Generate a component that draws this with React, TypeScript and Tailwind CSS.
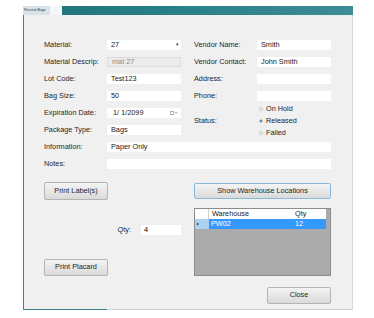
import React from 'react';

const font = { fontFamily: '"Liberation Sans", Arial, sans-serif' };

const Field: React.FC<{ value?: string; muted?: boolean; wide?: boolean; children?: React.ReactNode }> = ({ value, muted, wide, children }) => (
    <div
        className={`h-[10px] flex items-center pl-[4px] pr-[2px] ${wide ? 'w-[224px]' : 'w-[74px]'} ${muted ? 'bg-[#ececec] border border-[#dcdcdc] text-[#8a8a8a]' : 'bg-white text-[#1a1a1a]'}`}
    >
        <span className="flex-1 leading-none">{value}</span>
        {children}
    </div>
);

const Row: React.FC<{ label: string; children: React.ReactNode }> = ({ label, children }) => (
    <div className="h-[17px] flex items-center">
        <span className="w-[63px] leading-none text-[#262626]">{label}</span>
        {children}
    </div>
);

const Button: React.FC<{ label: string; className?: string; focused?: boolean }> = ({ label, className, focused }) => (
    <div
        className={`flex items-center justify-center rounded-[2px] border bg-gradient-to-b from-[#f4f4f4] to-[#dadada] text-[#1f1f1f] ${focused ? 'border-[#8ab9dc]' : 'border-[#b4b4b4]'} ${className ?? ''}`}
    >
        {label}
    </div>
);

const Radio: React.FC<{ label: string; checked?: boolean }> = ({ label, checked }) => (
    <div className="h-[12px] flex items-center">
        <span className="w-[4px] h-[4px] rounded-full border border-[#c8c8c8] bg-[#f6f6f6] flex items-center justify-center mr-[3px]">
            {checked && <span className="w-[2px] h-[2px] rounded-full bg-[#3a6c8c]" />}
        </span>
        <span className="leading-none text-[#262626]">{label}</span>
    </div>
);

export default function App() {
    return (
        <div className="w-[374px] h-[318px] bg-white overflow-hidden text-[7.3px]" style={font}>
            <div className="ml-[23px] mt-[6px] w-[330px]">
                {/* title bar */}
                <div className="h-[9px] flex bg-gradient-to-r from-[#1f7379] via-[#2a8189] to-[#3d8c97]">
                    <div className="w-[27px] bg-[#d7e3e8] text-[3.5px] text-[#2c3f4c] pl-px pt-[3px] leading-none">Receive Bags</div>
                    <div className="w-[12px] bg-[#f4f7f8]" />
                </div>
                {/* body */}
                <div className="h-[295px] bg-[#f0f0f0] border-l border-l-[#437f8c] border-r border-r-[#d8d8d8] border-b border-b-[#cfcfcf] pl-[20px] pr-[21px] pt-[21px]">
                    <div className="flex gap-[13px]">
                        <div className="w-[137px]">
                            <Row label="Material:">
                                <Field value="27">
                                    <span className="text-[5px] text-[#333]">▾</span>
                                </Field>
                            </Row>
                            <Row label="Material Descrip:">
                                <Field value="mat 27" muted />
                            </Row>
                            <Row label="Lot Code:">
                                <Field value="Test123" />
                            </Row>
                            <Row label="Bag Size:">
                                <Field value="50" />
                            </Row>
                            <Row label="Expiration Date:">
                                <Field value={'\u00a01/\u00a01/2099'}>
                                    <span className="flex items-center gap-px mr-[2px]">
                                        <span className="w-[4px] h-[4px] border border-[#b0b0b0]" />
                                        <span className="text-[4px] text-[#999]">▾</span>
                                    </span>
                                </Field>
                            </Row>
                            <Row label="Package Type:">
                                <Field value="Bags" />
                            </Row>
                        </div>
                        <div className="w-[137px]">
                            <Row label="Vendor Name:">
                                <Field value="Smith" />
                            </Row>
                            <Row label="Vendor Contact:">
                                <Field value="John Smith" />
                            </Row>
                            <Row label="Address:">
                                <Field />
                            </Row>
                            <Row label="Phone:">
                                <Field />
                            </Row>
                            <div className="h-[34px] flex items-center">
                                <span className="w-[65px] leading-none text-[#262626]">Status:</span>
                                <div className="flex flex-col">
                                    <Radio label="On Hold" />
                                    <Radio label="Released" checked />
                                    <Radio label="Failed" />
                                </div>
                            </div>
                        </div>
                    </div>
                    <Row label="Information:">
                        <Field value="Paper Only" wide />
                    </Row>
                    <Row label="Notes:">
                        <Field wide />
                    </Row>

                    <div className="flex gap-[13px] mt-[10px]">
                        <div className="w-[137px] flex flex-col">
                            <Button label="Print Label(s)" className="w-[64px] h-[18px]" />
                            <div className="flex items-center justify-end mt-[25px] h-[10px]">
                                <span className="leading-none text-[#262626] mr-[10px]">Qty:</span>
                                <div className="w-[40px] h-[10px] bg-white pl-[3px] flex items-center leading-none">4</div>
                            </div>
                            <Button label="Print Placard" className="w-[64px] h-[17px] mt-[24px]" />
                        </div>
                        <div className="w-[137px] flex flex-col pt-px">
                            <Button label="Show Warehouse Locations" focused className="h-[16px] bg-gradient-to-b from-[#eef4f8] to-[#d9dfe3]" />
                            <div className="mt-[9px] h-[68px] bg-[#ababab] border border-[#8c8c8c]">
                                <div className="flex h-[10px] w-[131px] bg-white text-[#222]">
                                    <div className="w-[14px] border-r border-[#d0d0d0]" />
                                    <div className="w-[82px] pl-[3px] flex items-center leading-none">Warehouse</div>
                                    <div className="flex-1 pl-[4px] flex items-center leading-none">Qty</div>
                                </div>
                                <div className="flex h-[10px] w-[131px]">
                                    <div className="w-[14px] bg-[#a9d2f3] flex items-center pl-[2px]">
                                        <span className="text-[4px] leading-none text-black">▸</span>
                                    </div>
                                    <div className="w-[82px] pl-[2px] bg-[#3399ff] text-white flex items-center leading-none">PW02</div>
                                    <div className="flex-1 pl-[4px] bg-[#3399ff] text-white flex items-center leading-none">12</div>
                                </div>
                            </div>
                            <div className="flex justify-end mt-[11px]">
                                <Button label="Close" className="w-[64px] h-[17px]" />
                            </div>
                        </div>
                    </div>
                </div>
                <div className="flex h-px -mt-px">
                    <div className="w-[84px] bg-[#3f7f8c]" />
                </div>
            </div>
        </div>
    );
}
